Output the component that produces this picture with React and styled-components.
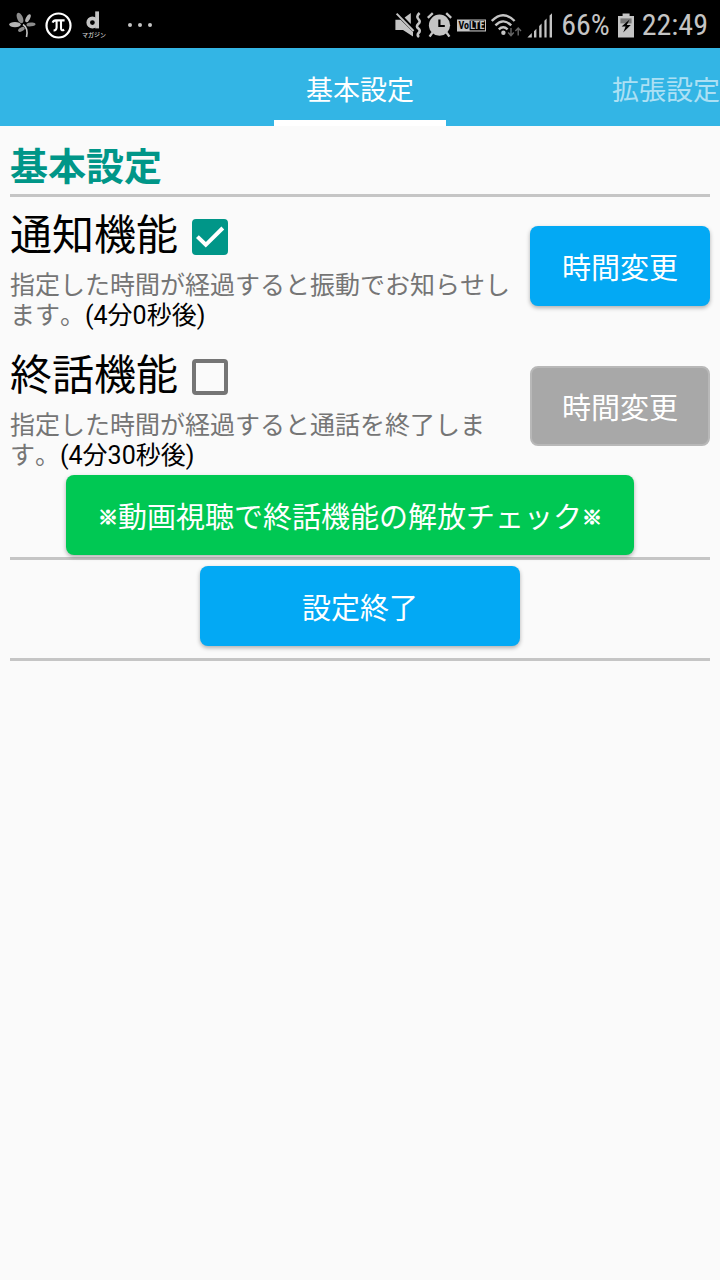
import React, { useState } from 'react';
import styled, { createGlobalStyle } from 'styled-components';

const GlobalStyle = createGlobalStyle`
  * {
    box-sizing: border-box;
  }

  body {
    margin: 0;
    min-height: 100vh;
    background: #fafafa;
    font-family: Roboto, 'Noto Sans CJK JP', sans-serif;
  }
`;

const StatusBar = styled.header`
  display: flex;
  align-items: center;
  justify-content: space-between;
  height: 48px;
  padding: 2px 11px 0 9px;
  background: #000;
  color: #c4c4c4;
`;

const StatusGroup = styled.div`
  display: flex;
  align-items: center;
  gap: ${props => props.$gap}px;

  svg {
    display: block;
    flex: none;
  }
`;

const StatusText = styled.span`
  margin: 0 1px;
  font-family: 'Roboto Condensed', Roboto, sans-serif;
  font-size: 30px;
  line-height: 32px;
`;

const TabBar = styled.nav`
  display: grid;
  grid-template-columns: 1fr auto 1fr;
  height: 78px;
  background: #33b5e5;
`;

const Tab = styled.button`
  grid-column: ${props => props.$column};
  justify-self: end;
  height: 78px;
  padding: 2px ${props => (props.$active ? 32 : 0)}px 0;
  border: 0;
  border-top: 6px solid transparent;
  border-bottom: 6px solid ${props => (props.$active ? '#fff' : 'transparent')};
  background: none;
  color: ${props => (props.$active ? '#fff' : 'rgba(255, 255, 255, 0.6)')};
  font-family: inherit;
  font-size: 27px;
  white-space: nowrap;
  cursor: pointer;
`;

const Content = styled.main`
  padding: 0 10px;
`;

const Heading = styled.h1`
  margin: 0;
  padding-top: 14px;
  color: #009688;
  font-size: 38px;
  font-weight: 700;
  line-height: 54px;
`;

const Divider = styled.hr`
  height: 3px;
  margin: 0;
  border: 0;
  background: #c5c5c5;
`;

const SettingList = styled.div`
  display: grid;
  gap: 2px;
`;

const SettingRow = styled.section`
  display: grid;
  grid-template-columns: 1fr 180px;
  align-items: center;
  gap: 20px;
  padding: 3px 0 4px;
`;

const SettingLabel = styled.label`
  display: flex;
  align-items: center;
  gap: 14px;
  height: 71px;
  color: #000;
  font-size: 42px;
  line-height: 70px;
`;

const CheckFrame = styled.span`
  display: grid;
  margin-top: 3px;

  > * {
    grid-area: 1 / 1;
  }

  svg {
    pointer-events: none;
  }
`;

const CheckInput = styled.input`
  appearance: none;
  width: 36px;
  height: 36px;
  margin: 0;
  border: 4px solid #757575;
  border-radius: 4px;

  &:checked {
    border-color: #009688;
    background: #009688;
  }
`;

const Description = styled.p`
  margin: 0;
  color: #757575;
  font-size: 25px;
  line-height: 30px;
  text-spacing-trim: space-all;
  font-kerning: none;
`;

const Delay = styled.span`
  color: #000;
`;

const ActionRow = styled.div`
  display: flex;
  justify-content: center;
  padding: ${props => props.$padding};
`;

const ActionButton = styled.button`
  height: 80px;
  padding: 0 32px;
  min-width: ${props => props.$minWidth || 180}px;
  border: 0;
  border-radius: 8px;
  background: ${props => props.$color || '#03a9f4'};
  box-shadow: 0 2px 4px rgba(0, 0, 0, 0.3);
  color: #fff;
  font-family: inherit;
  font-size: 29px;
  white-space: nowrap;
  cursor: pointer;

  &:disabled {
    border: 2px solid #b8b8b8;
    padding: 0 30px;
    background: #a8a8a8;
    box-shadow: none;
    cursor: default;
  }
`;

const Mark = styled.span`
  font-size: 20px;
  vertical-align: 3px;
  -webkit-text-stroke: 1px #fff;
`;

const LeafIcon = () => (
  <svg width="27" height="26" viewBox="0 0 27 26" fill="#b4b4b4">
    <ellipse cx="11" cy="6" rx="2.8" ry="5.6" transform="rotate(-24 11 6)" fill="#8c8c8c" />
    <ellipse cx="6" cy="12.6" rx="5.8" ry="2.6" />
    <ellipse cx="19" cy="6.2" rx="2" ry="4.4" transform="rotate(28 19 6.2)" />
    <ellipse cx="22" cy="12.4" rx="4.6" ry="1.9" transform="rotate(-6 22 12.4)" fill="#8c8c8c" />
    <ellipse cx="12.4" cy="17.4" rx="3.6" ry="1.9" transform="rotate(-28 12.4 17.4)" fill="#8c8c8c" />
    <path d="M14 12.5Q19.5 16 17.5 25" fill="none" stroke="#c4c4c4" strokeWidth="1.6" />
  </svg>
);

const PiIcon = () => (
  <svg width="27" height="27" viewBox="0 0 27 27" fill="none" stroke="#fff">
    <circle cx="13.5" cy="13.5" r="12" strokeWidth="2.2" />
    <path d="M7.6 10.6Q8.4 8.4 10.6 8.4H19.6M11.6 8.6V15.4Q11.4 18.6 8.6 18.4M16 8.6V16Q16 19.4 19.2 17.8" strokeWidth="2.1" />
  </svg>
);

const MagazineIcon = () => (
  <svg width="26" height="30" viewBox="0 0 26 30">
    <circle cx="11.4" cy="12.6" r="4.2" fill="none" stroke="#c4c4c4" strokeWidth="3.6" />
    <path d="M14.2 1.4H18V18.4H14.2Z" fill="#c4c4c4" />
    <text x="13" y="27" textAnchor="middle" fontSize="6" fontWeight="500" fill="#d0d0d0">マガジン</text>
  </svg>
);

const MoreIcon = () => (
  <svg width="30" height="6" viewBox="0 0 30 6" fill="#c4c4c4">
    <circle cx="5" cy="3" r="2" />
    <circle cx="15" cy="3" r="2" />
    <circle cx="25" cy="3" r="2" />
  </svg>
);

const VibrateIcon = () => (
  <svg width="27" height="26" viewBox="0 0 27 26" fill="#c4c4c4">
    <path d="M0.4 7.8H5.6L18 20V24.6L8 18H0.4Z" />
    <path d="M9.6 5.6L15.8 1V12Z" />
    <path d="M1.6 1.6L18.6 19" stroke="#c4c4c4" strokeWidth="2" />
    <path d="M24.6 1Q20.6 4.6 23.6 7.4Q26 9.6 23.2 12Q20.6 14.4 23.4 16.6Q26 18.8 23.6 21Q21.6 23 24 25" fill="none" stroke="#c4c4c4" strokeWidth="2.6" />
  </svg>
);

const AlarmIcon = () => (
  <svg width="25" height="26" viewBox="0 0 25 26" fill="none" stroke="#c4c4c4">
    <circle cx="12.5" cy="13.2" r="10.6" fill="#c4c4c4" stroke="none" />
    <path d="M0.8 5.8L5.8 1.2M24.2 5.8L19.2 1.2M5.4 20.6L2.6 24.6M19.6 20.6L22.4 24.6" strokeWidth="2.4" />
    <path d="M12.4 7.4V14H17.8" stroke="#000" strokeWidth="2.2" />
  </svg>
);

const VolteIcon = () => (
  <svg width="29" height="13" viewBox="0 0 29 13" fontFamily="'Roboto Condensed', Roboto, sans-serif" fontWeight="700">
    <path d="M0 0.5H29V12.5H0Z" fill="#c4c4c4" />
    <path d="M12.6 1.6H28V11.4H12.6Z" fill="#000" />
    <text x="1.4" y="10" fontSize="10" fill="#000">Vo</text>
    <text x="13.2" y="10" fontSize="10" fill="#c4c4c4">LTE</text>
  </svg>
);

const WifiIcon = () => (
  <svg width="31" height="25" viewBox="0 0 31 25" fill="none" stroke="#c4c4c4">
    <path d="M0.8 8Q12 -3.6 23.6 8" strokeWidth="2.4" />
    <path d="M4.4 12.4Q12.2 4.4 20.2 12.4" strokeWidth="2.4" />
    <path d="M7.8 16.4Q12.2 12.2 16.6 16.4" strokeWidth="2.4" />
    <circle cx="12.4" cy="19.8" r="2.2" fill="#c4c4c4" stroke="none" />
    <path d="M20 15V22.4M17.2 19.6L20 22.6L22.8 19.6M27.2 22.6V15.2M24.4 18L27.2 15L30 18" stroke="#666" strokeWidth="1.4" />
  </svg>
);

const SignalIcon = () => (
  <svg width="26" height="25" viewBox="0 0 26 25" fill="#c4c4c4">
    <path d="M0.4 24.4L4.8 20V24.4ZM7 18.2L9.4 15.8V24.4H7ZM12.2 13L14.6 10.6V24.4H12.2ZM17.4 7.8L19.6 5.6V24.4H17.4ZM22.6 2.6L25 0.2V24.4H22.6Z" />
  </svg>
);

const BatteryIcon = () => (
  <svg width="16" height="25" viewBox="0 0 16 25">
    <path d="M4.6 0.6H11.6V3H16V24.4H0V3H4.6Z" fill="#c4c4c4" />
    <path d="M2.4 5.4H13.6V10.4H2.4Z" fill="#777" />
    <path d="M11.6 6.4L3.6 13.6H7.6L5.2 19.6L12.8 12H8.8Z" fill="#000" />
  </svg>
);

const settings = [
  {
    id: 'notify',
    title: '通知機能',
    text: '指定した時間が経過すると振動でお知らせします。',
    delay: '(4分0秒後)',
  },
  {
    id: 'hangup',
    title: '終話機能',
    text: '指定した時間が経過すると通話を終了します。',
    delay: '(4分30秒後)',
  },
];

const Setting = ({ item, enabled, onToggle }) => (
  <SettingRow>
    <div>
      <SettingLabel htmlFor={item.id}>
        {item.title}
        <CheckFrame>
          <CheckInput id={item.id} type="checkbox" checked={enabled} onChange={onToggle} />
          {enabled && (
            <svg width="36" height="36" viewBox="0 0 36 36" fill="none" stroke="#fff" strokeWidth="4">
              <path d="M5.4 17.6L13.8 25.8L30.8 9" />
            </svg>
          )}
        </CheckFrame>
      </SettingLabel>
      <Description>
        {item.text}
        <Delay>{item.delay}</Delay>
      </Description>
    </div>
    <ActionButton type="button" disabled={!enabled}>時間変更</ActionButton>
  </SettingRow>
);

const App = () => {
  const [enabled, setEnabled] = useState({ notify: true, hangup: false });

  const toggle = id => setEnabled(prev => ({ ...prev, [id]: !prev[id] }));

  return (
    <>
      <GlobalStyle />
      <StatusBar>
        <StatusGroup $gap={9}>
          <LeafIcon />
          <PiIcon />
          <MagazineIcon />
          <span />
          <MoreIcon />
        </StatusGroup>
        <StatusGroup $gap={7}>
          <StatusGroup $gap={5}>
            <VibrateIcon />
            <AlarmIcon />
            <VolteIcon />
            <WifiIcon />
            <SignalIcon />
          </StatusGroup>
          <StatusText>66%</StatusText>
          <BatteryIcon />
          <StatusText>22:49</StatusText>
        </StatusGroup>
      </StatusBar>

      <TabBar>
        <Tab type="button" $column={2} $active>基本設定</Tab>
        <Tab type="button" $column={3}>拡張設定</Tab>
      </TabBar>

      <Content>
        <Heading>基本設定</Heading>
        <Divider />
        <SettingList>
          {settings.map(item => (
            <Setting
              key={item.id}
              item={item}
              enabled={enabled[item.id]}
              onToggle={() => toggle(item.id)}
            />
          ))}
        </SettingList>
        <ActionRow $padding="0 20px 2px 0">
          <ActionButton type="button" $color="#00c853">
            <Mark>※</Mark>動画視聴で終話機能の解放チェック<Mark>※</Mark>
          </ActionButton>
        </ActionRow>
        <Divider />
        <ActionRow $padding="6px 0 12px">
          <ActionButton type="button" $minWidth={320}>設定終了</ActionButton>
        </ActionRow>
        <Divider />
      </Content>
    </>
  );
};

export default App;
